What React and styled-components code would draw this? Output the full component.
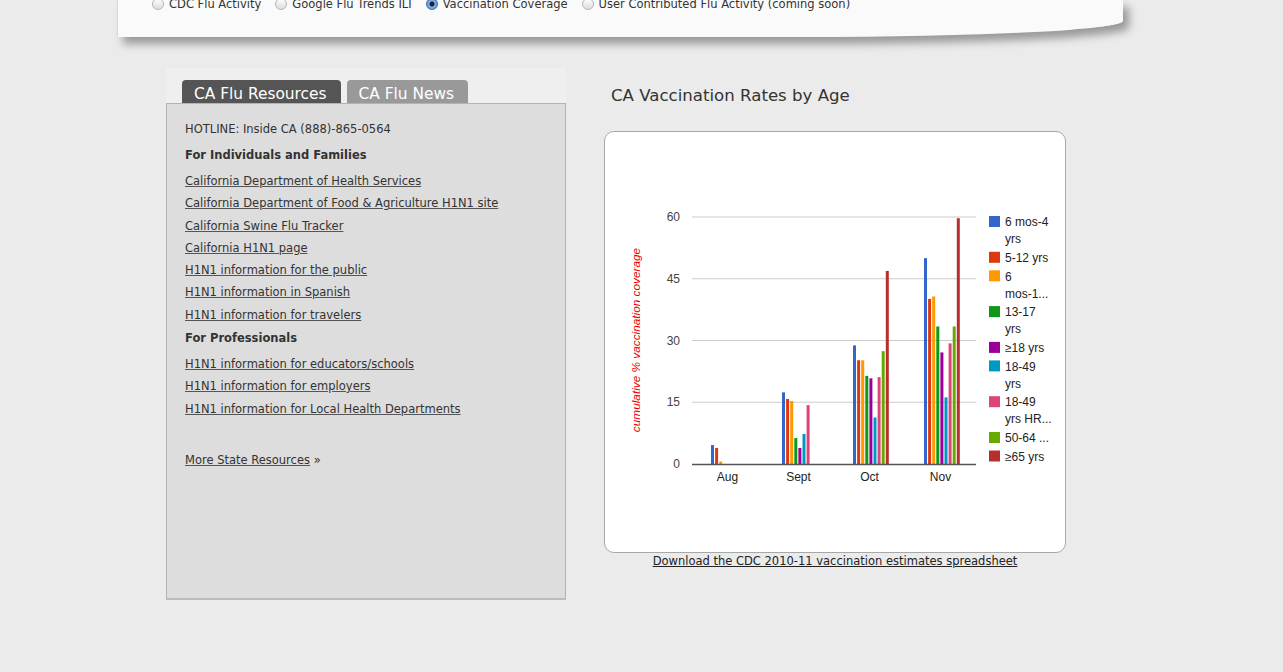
import React from 'react';
import styled, { createGlobalStyle } from 'styled-components';

const GlobalStyle = createGlobalStyle`
  body {
    margin: 0;
    background: #ebebeb;
    font-family: "DejaVu Sans", Verdana, sans-serif;
    color: #333;
  }
`

const Page = styled.div`
  padding-left: 117px;
  width: 1100px;
`

const TopCard = styled.div`
  width: 1005px;
  height: 37px;
  background: #fafafa;
  border-left: 1px solid #d8d8d8;
  border-bottom-right-radius: 320px 16px;
  box-shadow: 6px 7px 8px rgba(0, 0, 0, 0.35);
  overflow: hidden;
`

const RadioRow = styled.div`
  display: flex;
  align-items: center;
  gap: 14px;
  padding-left: 34px;
  margin-top: -3px;
  font-size: 11.5px;
  line-height: 14px;
  color: #333;
`

const RadioItem = styled.label`
  display: flex;
  align-items: center;
  gap: 5px;
`

const RadioDot = styled.span`
  width: 10px;
  height: 10px;
  border-radius: 50%;
  border: 1px solid ${p => (p.$checked ? '#3b6fb0' : '#b5b5b5')};
  background: ${p => (p.$checked
    ? 'radial-gradient(circle, #222 0 2px, #7fb0e8 3px, #4b8ad6 100%)'
    : 'linear-gradient(#ffffff, #dcdcdc)')};
`

const Columns = styled.div`
  display: flex;
  align-items: flex-start;
  margin-top: 31px;
  padding-left: 49px;
`

const Side = styled.div`
  width: 400px;
`

const TabStrip = styled.div`
  display: flex;
  gap: 6px;
  padding: 12px 0 0 16px;
  background: #efefef;
`

const Tab = styled.div`
  height: 23px;
  line-height: 28px;
  padding: 0 14px 0 12px;
  font-size: 15.4px;
  color: #fff;
  background: ${p => (p.$active ? '#555555' : '#999999')};
  border-radius: 4px 4px 0 0;
  overflow: hidden;
`

const PanelBody = styled.div`
  box-sizing: border-box;
  height: 497px;
  padding: 14px 18px 0;
  background: #dddddd;
  border: 1px solid #b3b3b3;
  border-bottom: 2px solid #bcbcbc;
  font-size: 11.5px;
`

const Line = styled.div`
  line-height: 22px;
`

const Heading = styled.div`
  line-height: 22px;
  margin-top: ${p => (p.$tight ? 1 : 4)}px;
  font-weight: bold;
`

const LinkList = styled.div`
  margin-top: ${p => p.$gap || 4}px;
`

const LinkLine = styled.div`
  line-height: 22.3px;

  a {
    color: #333;
    text-decoration: underline;
    text-decoration-color: #555;
  }
`

const Main = styled.div`
  margin-left: 38px;
  width: 462px;
`

const Title = styled.h2`
  margin: 18px 0 25px 7px;
  font-size: 16.6px;
  line-height: 20px;
  font-weight: normal;
  color: #333;
`

const ChartCard = styled.div`
  box-sizing: border-box;
  width: 462px;
  height: 422px;
  background: #fff;
  border: 1px solid #a8a8a8;
  border-radius: 10px;

  svg {
    display: block;
  }
`

const Download = styled.a`
  display: block;
  text-align: center;
  font-size: 11.5px;
  line-height: 17px;
  color: #222;
  text-decoration: underline;
`

const COLORS = ['#3366cc', '#dc3912', '#ff9900', '#109618', '#990099', '#0099c6', '#dd4477', '#66aa00', '#b82e2e']

const DATA = [
  { label: 'Aug', values: [4.6, 3.9, 0.6, 0, 0, 0, 0, 0, 0] },
  { label: 'Sept', values: [17.4, 15.8, 15.3, 6.3, 3.9, 7.3, 14.3, 0, 0] },
  { label: 'Oct', values: [28.8, 25.2, 25.2, 21.4, 20.8, 11.3, 21.1, 27.4, 46.9] },
  { label: 'Nov', values: [50, 40.1, 40.7, 33.4, 27.1, 16.2, 29.3, 33.4, 59.7] },
]

const LEGEND = [
  ['6 mos-4', 'yrs'],
  ['5-12 yrs'],
  ['6', 'mos-1...'],
  ['13-17', 'yrs'],
  ['≥18 yrs'],
  ['18-49', 'yrs'],
  ['18-49', 'yrs HR...'],
  ['50-64 ...'],
  ['≥65 yrs'],
]

const base = 332
const unit = 4.117
const plotLeft = 87
const plotRight = 371
const groupW = (plotRight - plotLeft) / 4

const Chart = () => {
  let legendY = 90
  return (
    <svg width="460" height="420" fontFamily="'Liberation Sans', Arial, sans-serif">
      {[15, 30, 45, 60].map(v => (
        <line key={v} x1={plotLeft} x2={plotRight} y1={base - v * unit} y2={base - v * unit} stroke="#cccccc" strokeWidth="1" />
      ))}
      {[0, 15, 30, 45, 60].map(v => (
        <text key={v} x="75" y={base - v * unit} dy="0.35em" textAnchor="end" fontSize="12" fill="#444">{v}</text>
      ))}
      {DATA.map((g, gi) => {
        const cx = plotLeft + groupW * gi + groupW / 2
        return (
          <g key={g.label}>
            {g.values.map((v, i) => v > 0 && (
              <rect key={i} x={cx - 16.5 + i * 4.1} y={base - v * unit} width="3" height={v * unit} fill={COLORS[i]} />
            ))}
            <text x={cx} y="345" dy="0.35em" textAnchor="middle" fontSize="12" fill="#222">{g.label}</text>
          </g>
        )
      })}
      <line x1={plotLeft} x2={plotRight} y1={base + 0.5} y2={base + 0.5} stroke="#555" strokeWidth="1.5" />
      <text transform="translate(35 208) rotate(-90)" textAnchor="middle" fontSize="11.8" fontStyle="italic" fill="#ee0000">
        cumulative % vaccination coverage
      </text>
      {LEGEND.map((lines, i) => {
        const y = legendY
        legendY += lines.length * 17.3 + 1.2
        return (
          <g key={i}>
            <rect x="384" y={y - 6} width="11" height="11" fill={COLORS[i]} />
            {lines.map((t, li) => (
              <text key={li} x="400" y={y + li * 17} dy="0.35em" fontSize="12" fill="#222">{t}</text>
            ))}
          </g>
        )
      })}
    </svg>
  )
}

const radios = [
  { label: 'CDC Flu Activity' },
  { label: 'Google Flu Trends ILI' },
  { label: 'Vaccination Coverage', checked: true },
  { label: 'User Contributed Flu Activity (coming soon)' },
]

const individuals = [
  'California Department of Health Services',
  'California Department of Food & Agriculture H1N1 site',
  'California Swine Flu Tracker',
  'California H1N1 page',
  'H1N1 information for the public',
  'H1N1 information in Spanish',
  'H1N1 information for travelers',
]

const professionals = [
  'H1N1 information for educators/schools',
  'H1N1 information for employers',
  'H1N1 information for Local Health Departments',
]

const App = () => {
  return (
    <>
      <GlobalStyle />
      <Page>
        <TopCard>
          <RadioRow>
            {radios.map(r => (
              <RadioItem key={r.label}>
                <RadioDot $checked={r.checked} />
                {r.label}
              </RadioItem>
            ))}
          </RadioRow>
        </TopCard>

        <Columns>
          <Side>
            <TabStrip>
              <Tab $active>CA Flu Resources</Tab>
              <Tab>CA Flu News</Tab>
            </TabStrip>
            <PanelBody>
              <Line>HOTLINE: Inside CA (888)-865-0564</Line>
              <Heading>For Individuals and Families</Heading>
              <LinkList>
                {individuals.map(t => (
                  <LinkLine key={t}><a href="#">{t}</a></LinkLine>
                ))}
              </LinkList>
              <Heading $tight>For Professionals</Heading>
              <LinkList>
                {professionals.map(t => (
                  <LinkLine key={t}><a href="#">{t}</a></LinkLine>
                ))}
              </LinkList>
              <LinkList $gap={29}>
                <LinkLine><a href="#">More State Resources</a> »</LinkLine>
              </LinkList>
            </PanelBody>
          </Side>

          <Main>
            <Title>CA Vaccination Rates by Age</Title>
            <ChartCard>
              <Chart />
            </ChartCard>
            <Download href="#">Download the CDC 2010-11 vaccination estimates spreadsheet</Download>
          </Main>
        </Columns>
      </Page>
    </>
  )
}

export default App;
